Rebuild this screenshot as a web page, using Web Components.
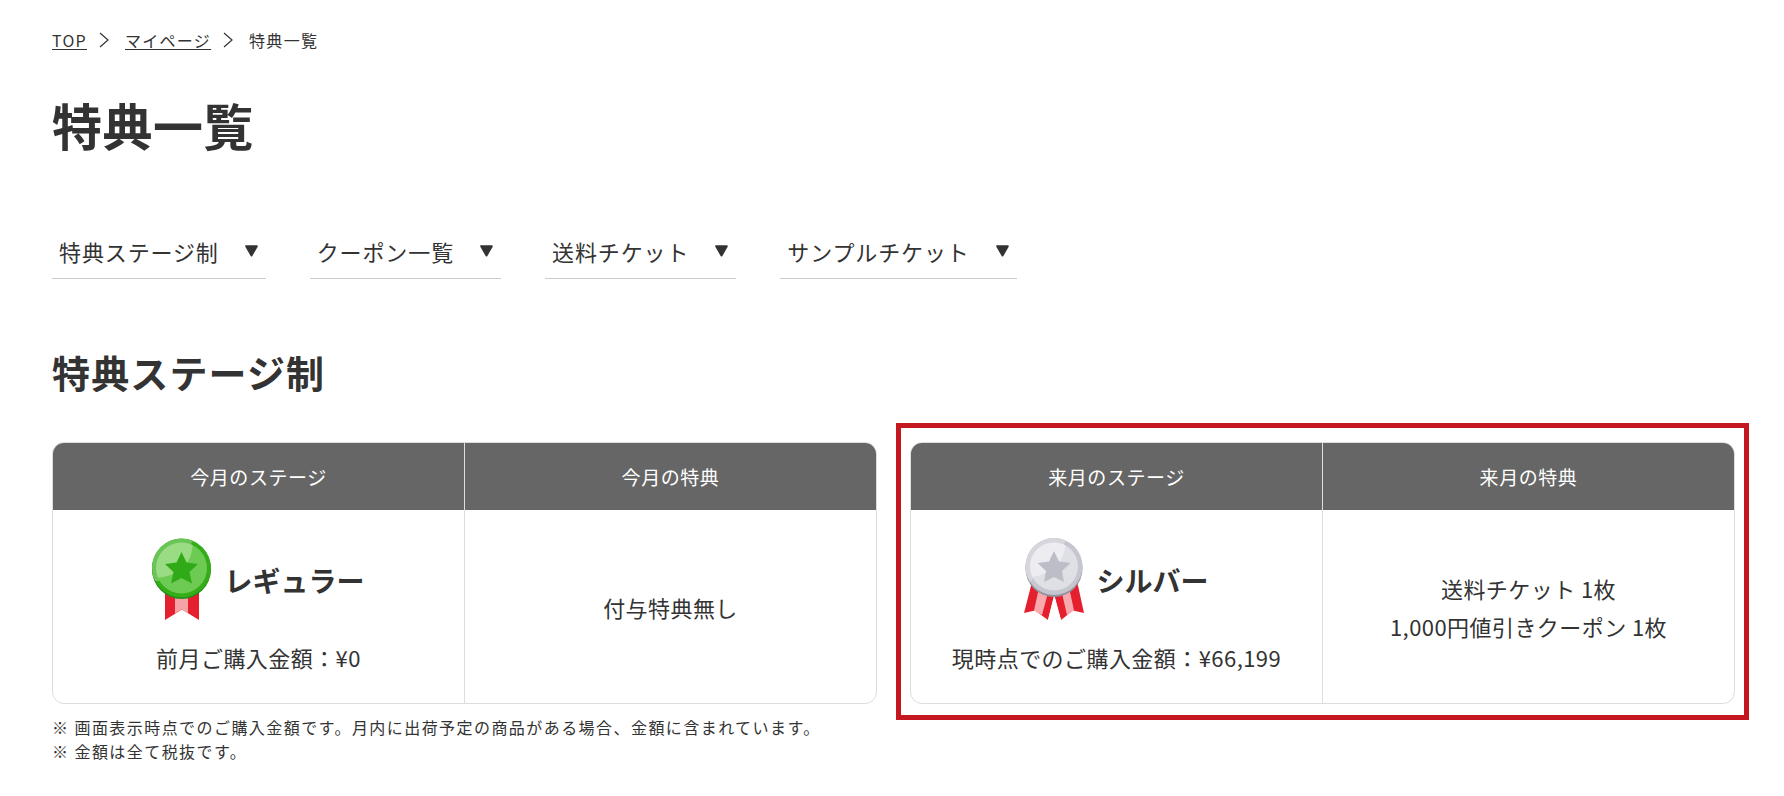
<!DOCTYPE html>
<html lang="ja">
<head>
<meta charset="utf-8">
<meta name="viewport" content="width=device-width, initial-scale=1">
<title>特典一覧</title>
<style>
body { margin: 0; background: #fff; color: #333; font-family: "Noto Sans CJK JP", "Noto Sans", sans-serif; font-size: 22px; line-height: 38px; letter-spacing: 0.02em; }
</style>
</head>
<body>
<benefits-page></benefits-page>

<template id="t-page">
<style>
:host { display: block; padding: 28px 49px 24px 52px; }
h1 { margin: 36px 0 0; font-size: 50px; line-height: 72px; font-weight: 700; }
nav { display: flex; flex-wrap: wrap; gap: 16px 44px; margin-top: 67px; }
h2 { margin: 65px 0 0; font-size: 38px; line-height: 56px; font-weight: 700; letter-spacing: 0.03em; }
.stages { display: grid; grid-template-columns: 1fr 1fr; gap: 33px; margin-top: 42px; }
ul { list-style: none; margin: 11px 0 0; padding: 0; font-size: 16px; line-height: 24px; letter-spacing: 0.09em; }
@media (max-width: 1100px) { .stages { grid-template-columns: 1fr; } }
</style>
<bread-crumb>
  <crumb-item href="#top">TOP</crumb-item>
  <crumb-item href="#mypage">マイページ</crumb-item>
  <crumb-item>特典一覧</crumb-item>
</bread-crumb>
<main>
<h1>特典一覧</h1>
<nav aria-label="ページ内リンク">
  <jump-link href="#stage">特典ステージ制</jump-link>
  <jump-link href="#coupon">クーポン一覧</jump-link>
  <jump-link href="#shipping">送料チケット</jump-link>
  <jump-link href="#sample">サンプルチケット</jump-link>
</nav>
<h2 id="stage">特典ステージ制</h2>
<div class="stages">
  <stage-card>
    <span slot="stage-title">今月のステージ</span>
    <span slot="benefit-title">今月の特典</span>
    <stage-medal slot="medal" rank="regular"></stage-medal>
    <span slot="name">レギュラー</span>
    <span slot="amount">前月ご購入金額：¥0</span>
    <div slot="benefit">付与特典無し</div>
  </stage-card>
  <stage-card highlighted>
    <span slot="stage-title">来月のステージ</span>
    <span slot="benefit-title">来月の特典</span>
    <stage-medal slot="medal" rank="silver"></stage-medal>
    <span slot="name">シルバー</span>
    <span slot="amount">現時点でのご購入金額：¥66,199</span>
    <div slot="benefit">送料チケット 1枚</div>
    <div slot="benefit">1,000円値引きクーポン 1枚</div>
  </stage-card>
</div>
<ul>
  <li>※ 画面表示時点でのご購入金額です。月内に出荷予定の商品がある場合、金額に含まれています。</li>
  <li>※ 金額は全て税抜です。</li>
</ul>
</main>
</template>

<template id="t-crumbs">
<style>
:host { display: block; font-size: 16px; line-height: 24px; letter-spacing: 0.08em; }
nav { display: flex; flex-wrap: wrap; }
</style>
<nav aria-label="パンくずリスト"><slot></slot></nav>
</template>

<template id="t-crumb">
<style>
:host { display: flex; align-items: center; }
a { color: inherit; text-decoration: underline; text-underline-offset: 2px; text-decoration-thickness: 1px; }
svg { width: 10px; height: 16px; margin: 0 16px 0 12px; fill: none; stroke: #333; stroke-width: 1.2; }
</style>
</template>

<template id="t-jump">
<style>
:host { display: block; letter-spacing: 0.04em; }
a { display: flex; align-items: center; gap: 26px; padding: 5px 8px 8px 7px; border-bottom: 1px solid #ccc; color: inherit; text-decoration: none; }
svg { width: 13px; height: 12px; fill: #333; stroke: #333; stroke-width: 2; stroke-linejoin: round; }
</style>
<a><slot></slot><svg viewBox="0 0 13 12" aria-hidden="true"><path d="M1.2 1.2H11.8L6.5 10.5Z"/></svg></a>
</template>

<template id="t-card">
<style>
:host { display: block; position: relative; }
:host([highlighted])::after { content: ""; position: absolute; inset: -19px -14px -16px -14px; border: 5px solid #c51720; pointer-events: none; }
.frame { border: 1px solid #ddd; border-radius: 12px; overflow: hidden; }
table { width: 100%; table-layout: fixed; border-collapse: collapse; text-align: center; }
th { height: 67px; padding: 0; background: #666; color: #fff; font-size: 19px; line-height: 28px; font-weight: 400; letter-spacing: 0.03em; }
td { height: 193px; padding: 0; vertical-align: middle; }
th + th, td + td { border-left: 1px solid #ddd; }
.rank { display: flex; justify-content: center; align-items: center; gap: 12px; margin-bottom: 18px; }
.name { padding-top: 2px; font-size: 28px; line-height: 40px; font-weight: 700; letter-spacing: 0; }
</style>
<div class="frame">
<table>
<thead><tr><th scope="col"><slot name="stage-title"></slot></th><th scope="col"><slot name="benefit-title"></slot></th></tr></thead>
<tbody><tr>
<td><div class="rank"><slot name="medal"></slot><span class="name"><slot name="name"></slot></span></div><slot name="amount"></slot></td>
<td><slot name="benefit"></slot></td>
</tr></tbody>
</table>
</div>
</template>

<template id="t-regular">
<style>:host { display: block; } svg { display: block; width: 60px; height: 82px; }</style>
<svg viewBox="0 0 60 82" aria-hidden="true">
<defs><clipPath id="face"><circle cx="29.500" cy="30" r="25.500"/></clipPath></defs>
<path d="M13 50H47V82L30 71.500L13 82Z" fill="#e4202f"/>
<path d="M23 50H36V75.500L30 71.500L23 75.500Z" fill="#f6a3a5"/>
<circle cx="29.500" cy="31.500" r="29.500" fill="#228c18"/>
<circle cx="29.500" cy="30" r="29.500" fill="#35ad19"/>
<path d="M0 30A29.500 29.500 0 0 1 41 3L36 10A25 25 0 0 0 8 43L3 43Q0 37 0 30Z" fill="#6ac457"/>
<circle cx="29.500" cy="30" r="25.500" fill="#6dcb53"/>
<path clip-path="url(#face)" d="M0 0H41Q42 38 2 40Z" fill="#99dc83"/>
<path d="M29.500 14L34.500 24.500L46 26L37.500 34L40 45.500L29.500 40L19 45.500L21.500 34L13 26L24.500 24.500Z" fill="#30aa16"/>
</svg>
</template>

<template id="t-silver">
<style>:host { display: block; } svg { display: block; width: 60px; height: 82px; }</style>
<svg viewBox="0 0 60 82" aria-hidden="true">
<defs><clipPath id="face"><circle cx="30" cy="28.500" r="24"/></clipPath></defs>
<path d="M8 44L0 75L11 72.500L24 82L32 50L53 43L60 75L49 72.500L37 82L28 48Z" fill="#e4202f"/>
<path d="M15 50L10 72.500L18 77L25 51Z" fill="#f8a9ad"/>
<path d="M37 51L43 77L50 72.500L45 49Z" fill="#f8a9ad"/>
<path d="M30 58L24 82H37Z" fill="#fff"/>
<circle cx="30" cy="30.500" r="28.500" fill="#9293a0"/>
<circle cx="30" cy="28.500" r="28.500" fill="#c6c6d0"/>
<path d="M1.500 28.500A28.500 28.500 0 0 1 42 2.700L37 10L6 44Q1.500 37 1.500 28.500Z" fill="#d6d6dc"/>
<circle cx="30" cy="28.500" r="24" fill="#dfdfe6"/>
<path clip-path="url(#face)" d="M0 0H42Q42 36 2 40Z" fill="#ededf1"/>
<path d="M30 13L35 23.500L46.500 25L38 33L40 44L30 39L20 44L22 33L13.500 25L25 23.500Z" fill="#bdbdc8"/>
</svg>
</template>

<script>
const stamp = (host, id) => {
  const root = host.attachShadow({ mode: "open" });
  root.append(document.getElementById(id).content.cloneNode(true));
  return root;
};

class StageMedal extends HTMLElement {
  connectedCallback() {
    if (!this.shadowRoot) stamp(this, this.getAttribute("rank") === "silver" ? "t-silver" : "t-regular");
  }
}

class StageCard extends HTMLElement {
  connectedCallback() { if (!this.shadowRoot) stamp(this, "t-card"); }
}

class JumpLink extends HTMLElement {
  connectedCallback() {
    if (this.shadowRoot) return;
    stamp(this, "t-jump").querySelector("a").href = this.getAttribute("href");
  }
}

class CrumbItem extends HTMLElement {
  connectedCallback() {
    if (this.shadowRoot) return;
    const root = stamp(this, "t-crumb");
    const href = this.getAttribute("href");
    const box = document.createElement("div");
    box.style.display = "contents";
    box.innerHTML = href
      ? `<a href="${href}"><slot></slot></a><svg viewBox="0 0 10 16" aria-hidden="true"><path d="M1 1L9 8L1 15"/></svg>`
      : `<span aria-current="page"><slot></slot></span>`;
    root.append(box);
  }
}

class BreadCrumb extends HTMLElement {
  connectedCallback() { if (!this.shadowRoot) stamp(this, "t-crumbs"); }
}

class BenefitsPage extends HTMLElement {
  connectedCallback() { if (!this.shadowRoot) stamp(this, "t-page"); }
}

customElements.define("stage-medal", StageMedal);
customElements.define("stage-card", StageCard);
customElements.define("jump-link", JumpLink);
customElements.define("crumb-item", CrumbItem);
customElements.define("bread-crumb", BreadCrumb);
customElements.define("benefits-page", BenefitsPage);
</script>
</body>
</html>
